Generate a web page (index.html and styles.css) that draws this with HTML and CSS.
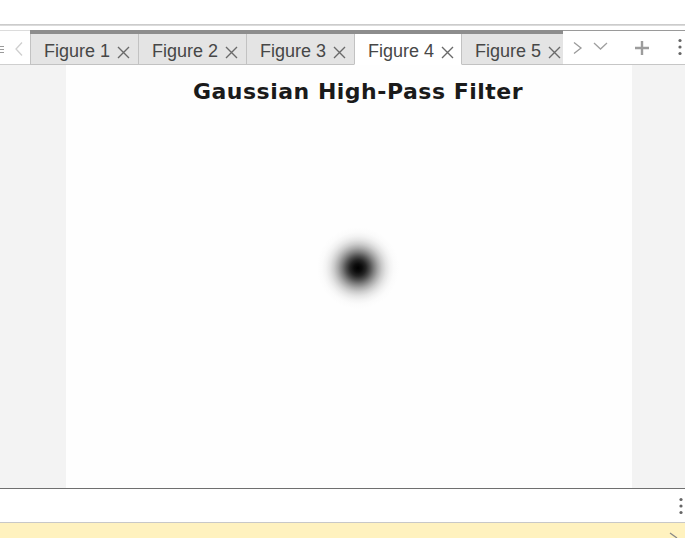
FILE: index.html
```html
<!DOCTYPE html>
<html>
<head>
<meta charset="utf-8">
<link rel="stylesheet" href="styles.css">
</head>
<body>
<div class="app">
  <div class="topspace"></div>
  <div class="topline"></div>
  <div class="gap"></div>
  <div class="tabbar">
    <div class="tb-left">
      <svg class="menu-ic" width="6" height="10" viewBox="0 0 6 10"><path d="M0 1.5H5M0 4.5H5M0 7.5H5" stroke="#9a9a9a" stroke-width="1.2"/></svg>
      <svg class="prev-ic" width="10" height="16" viewBox="0 0 10 16"><path d="M8 1.5L2 8L8 14.5" fill="none" stroke="#cfcfcf" stroke-width="1.3"/></svg>
    </div>
    <div class="tabs">
      <div class="tab"><span class="label">Figure 1</span><svg class="x" width="13" height="13" viewBox="0 0 13 13"><path d="M1 1L12 12M12 1L1 12" stroke="#6a6a6a" stroke-width="1.4"/></svg></div>
      <div class="tab"><span class="label">Figure 2</span><svg class="x" width="13" height="13" viewBox="0 0 13 13"><path d="M1 1L12 12M12 1L1 12" stroke="#6a6a6a" stroke-width="1.4"/></svg></div>
      <div class="tab"><span class="label">Figure 3</span><svg class="x" width="13" height="13" viewBox="0 0 13 13"><path d="M1 1L12 12M12 1L1 12" stroke="#6a6a6a" stroke-width="1.4"/></svg></div>
      <div class="tab active"><span class="label">Figure 4</span><svg class="x" width="13" height="13" viewBox="0 0 13 13"><path d="M1 1L12 12M12 1L1 12" stroke="#6a6a6a" stroke-width="1.4"/></svg></div>
      <div class="tab last"><span class="label">Figure 5</span><svg class="x" width="13" height="13" viewBox="0 0 13 13"><path d="M1 1L12 12M12 1L1 12" stroke="#6a6a6a" stroke-width="1.4"/></svg></div>
    </div>
    <div class="tb-right">
      <svg class="next-ic" width="12" height="14" viewBox="0 0 12 14"><path d="M2 1.5L9 7L2 12.5" fill="none" stroke="#9a9a9a" stroke-width="1.3"/></svg>
      <svg class="down-ic" width="15" height="8" viewBox="0 0 15 8"><path d="M1 1L7.5 7L14 1" fill="none" stroke="#a0a0a0" stroke-width="1.3"/></svg>
      <svg class="plus-ic" width="16" height="16" viewBox="0 0 16 16"><path d="M8 1V15M1 8H15" stroke="#9c9c9c" stroke-width="2.4"/></svg>
      <svg class="dots-ic" width="6" height="18" viewBox="0 0 6 18"><circle cx="3" cy="2.5" r="1.6" fill="#666"/><circle cx="3" cy="9" r="1.6" fill="#666"/><circle cx="3" cy="15.5" r="1.6" fill="#666"/></svg>
    </div>
  </div>
  <div class="content">
    <div class="figure">
      <div class="title">Gaussian High-Pass Filter</div>
      <div class="plot"></div>
    </div>
  </div>
  <div class="statusbar">
    <svg class="dots-ic2" width="6" height="18" viewBox="0 0 6 18"><circle cx="3" cy="2.5" r="1.6" fill="#666"/><circle cx="3" cy="9" r="1.6" fill="#666"/><circle cx="3" cy="15.5" r="1.6" fill="#666"/></svg>
  </div>
  <div class="notice">
    <svg class="resize-ic" width="10" height="6" viewBox="0 0 10 6"><path d="M1 1L8 6" stroke="#888" stroke-width="1.3"/></svg>
  </div>
</div>
</body>
</html>
```
FILE: styles.css
```css
html, body {
  margin: 0;
  padding: 0;
  background: #ffffff;
}
.app {
  width: 685px;
  height: 538px;
  overflow: hidden;
  display: flex;
  flex-direction: column;
  font-family: "Liberation Sans", Arial, sans-serif;
}
.topspace {
  height: 24px;
  background: #fff;
}
.topline {
  height: 2px;
  background: linear-gradient(#c4c4c4, #e2e2e2);
}
.gap {
  height: 4px;
  background: #fff;
}
.tabbar {
  height: 35px;
  display: flex;
}
.tb-left {
  width: 30px;
  box-sizing: border-box;
  border-top: 1px solid #dcdcdc;
  border-bottom: 1px solid #cfcfcf;
  display: flex;
  align-items: center;
}
.menu-ic {
  margin-left: -1px;
  margin-top: 4px;
}
.prev-ic {
  margin-left: 9px;
  margin-top: 2px;
}
.tabs {
  width: 533px;
  display: flex;
  overflow: hidden;
  border-top: 4px solid #8d8d8d;
  box-sizing: border-box;
}
.tab {
  flex: 0 0 108px;
  box-sizing: border-box;
  height: 31px;
  background: #e4e4e4;
  border-left: 1px solid #c2c2c2;
  border-bottom: 1px solid #c2c2c2;
  display: flex;
  align-items: center;
  padding-left: 13px;
  padding-top: 5px;
  color: #474747;
  font-size: 18px;
}
.tab.active {
  background: #ffffff;
  border-bottom-color: #ffffff;
  border-right: 1px solid #c2c2c2;
}
.tab.active + .tab {
  border-left: none;
}
.tab .label {
  white-space: nowrap;
}
.tab .x {
  margin-left: 7px;
  flex: none;
  margin-top: 1px;
}
.tb-right {
  flex: 1;
  box-sizing: border-box;
  border-top: 1px solid #9a9a9a;
  border-bottom: 1px solid #c6c6c6;
  display: flex;
  align-items: center;
  padding-top: 1px;
}
.next-ic {
  margin-left: 9px;
}
.down-ic {
  margin-left: 9px;
  margin-top: -4px;
}
.plus-ic {
  margin-left: 26px;
  margin-top: -1px;
}
.dots-ic {
  margin-left: 27px;
  margin-top: -2px;
}
.content {
  height: 423px;
  background: #f3f3f3;
  display: flex;
}
.figure {
  margin-left: 66px;
  width: 566px;
  background: #fefefe;
  display: flex;
  flex-direction: column;
}
.title {
  padding-top: 14px;
  padding-left: 18px;
  text-align: center;
  font-family: "DejaVu Sans", sans-serif;
  font-weight: bold;
  font-size: 22px;
  line-height: 26px;
  color: #1a1a1a;
  letter-spacing: 0.5px;
}
.plot {
  flex: 1;
  background: radial-gradient(circle 44px at 292px 163px,
    #000000 0px,
    #0c0c0c 4px,
    #262626 8px,
    #505050 12px,
    #808080 16px,
    #aaaaaa 20px,
    #cccccc 24px,
    #e4e4e4 28px,
    #f3f3f3 32px,
    #fbfbfb 36px,
    #fefefe 41px);
}
.statusbar {
  height: 35px;
  box-sizing: border-box;
  border-top: 1px solid #6f6f6f;
  border-bottom: 1px solid #c8c8c8;
  background: #fff;
  display: flex;
  justify-content: flex-end;
  align-items: center;
}
.dots-ic2 {
  margin-right: 1px;
  margin-top: 1px;
}
.notice {
  flex: 1;
  background: #fff2bf;
  display: flex;
  justify-content: flex-end;
  align-items: flex-end;
}
.resize-ic {
  margin-right: 6px;
}
```
